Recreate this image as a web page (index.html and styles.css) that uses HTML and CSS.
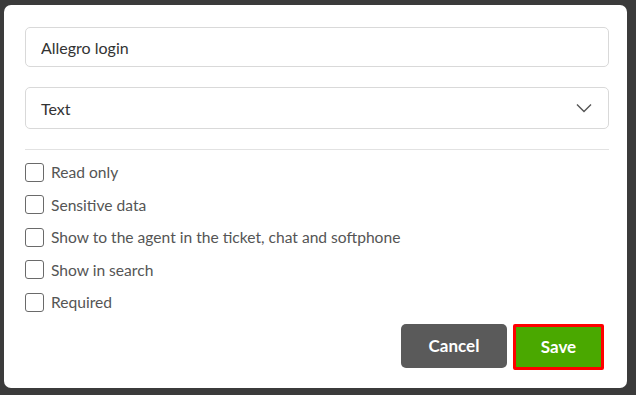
FILE: index.html
```html
<!DOCTYPE html>
<html lang="en">
<head>
    <meta charset="UTF-8">
    <meta name="viewport" content="width=device-width, initial-scale=1.0">
    <title>Edit field</title>
    <link rel="stylesheet" href="styles.css">
</head>
<body>
    <div class="modal">
        <div class="field">
            <input class="text-input" type="text" value="Allegro login">
        </div>
        <div class="field select-box">
            <span>Text</span>
            <svg class="chevron" width="16" height="10" viewBox="0 0 16 10">
                <path d="M1 1.5 L8 8.5 L15 1.5" fill="none" stroke="#555" stroke-width="1.4"/>
            </svg>
        </div>
        <hr class="divider">
        <div class="options">
            <label class="option"><span class="box"></span>Read only</label>
            <label class="option"><span class="box"></span>Sensitive data</label>
            <label class="option"><span class="box"></span>Show to the agent in the ticket, chat and softphone</label>
            <label class="option"><span class="box"></span>Show in search</label>
            <label class="option"><span class="box"></span>Required</label>
        </div>
        <div class="actions">
            <button class="btn btn-cancel">Cancel</button>
            <button class="btn btn-save">Save</button>
        </div>
    </div>
</body>
</html>
```

FILE: styles.css
```css
body {
    margin: 0;
    padding: 5px 0 0 4px;
    background: #3b3b3b;
    font-family: Lato, "Open Sans", sans-serif;
    height: 395px;
    box-sizing: border-box;
    overflow: hidden;
}
.modal {
    width: 623px;
    height: 383px;
    box-sizing: border-box;
    background: #fff;
    border-radius: 7px;
    padding: 22px 18px 0 21px;
}
.field {
    margin-bottom: 20px;
}
.text-input {
    display: block;
    width: 100%;
    height: 40px;
    box-sizing: border-box;
    border: 1px solid #d9d9d9;
    border-radius: 5px;
    padding: 0 15px;
    font-family: inherit;
    font-size: 16px;
    color: #333;
    outline: none;
}
.select-box {
    display: flex;
    align-items: center;
    justify-content: space-between;
    height: 42px;
    box-sizing: border-box;
    border: 1px solid #d9d9d9;
    border-radius: 5px;
    padding: 0 16px 0 15px;
    font-size: 16px;
    color: #333;
}
.divider {
    border: none;
    border-top: 1px solid #e2e2e2;
    margin: 0 0 6px;
}
.options {
    display: flex;
    flex-direction: column;
}
.option {
    display: flex;
    align-items: center;
    height: 32.5px;
    font-size: 15.6px;
    color: #555;
}
.box {
    width: 17px;
    height: 17px;
    border: 1px solid #6a6a6a;
    border-radius: 3px;
    margin-right: 7px;
    flex-shrink: 0;
}
.actions {
    display: flex;
    justify-content: flex-end;
    gap: 6px;
    margin-top: 5px;
    padding-right: 5px;
}
.btn {
    font-family: inherit;
    font-size: 17px;
    font-weight: bold;
    color: #fff;
    border: none;
    cursor: pointer;
    height: 44px;
}
.btn-cancel {
    width: 106px;
    background: #5a5a5a;
    border-radius: 5px;
}
.btn-save {
    width: 91px;
    height: 46px;
    background: #4aa800;
    border: 3px solid #ff0000;
    border-radius: 2px;
}
```
